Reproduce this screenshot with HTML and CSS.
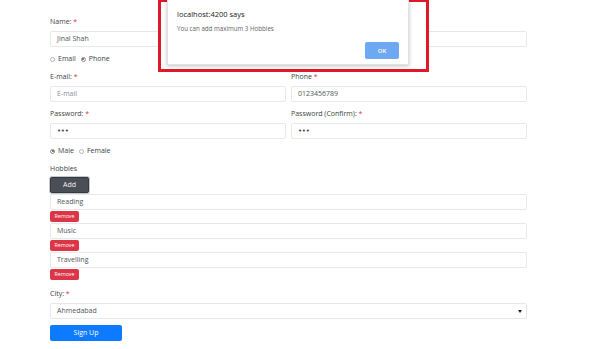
FILE: index.html
```html
<!DOCTYPE html>
<html>
<head>
<meta charset="utf-8">
<link rel="stylesheet" href="styles.css">
</head>
<body>
<div class="page">
  <form class="form">
    <div class="group">
      <label class="lbl">Name: <span class="req">*</span></label>
      <div class="input">Jinal Shah</div>
    </div>
    <div class="radios">
      <span class="radio"></span><span class="rlabel">Email</span>
      <span class="radio checked"></span><span class="rlabel">Phone</span>
    </div>
    <div class="row">
      <div class="group col">
        <label class="lbl">E-mail: <span class="req">*</span></label>
        <div class="input placeholder">E-mail</div>
      </div>
      <div class="group col">
        <label class="lbl">Phone <span class="req">*</span></label>
        <div class="input">0123456789</div>
      </div>
    </div>
    <div class="row">
      <div class="group col">
        <label class="lbl">Password: <span class="req">*</span></label>
        <div class="input dots">•••</div>
      </div>
      <div class="group col">
        <label class="lbl">Password (Confirm): <span class="req">*</span></label>
        <div class="input dots">•••</div>
      </div>
    </div>
    <div class="radios">
      <span class="radio checked"></span><span class="rlabel">Male</span>
      <span class="radio"></span><span class="rlabel">Female</span>
    </div>
    <div class="hobbies">
      <label class="lbl">Hobbies</label>
      <button type="button" class="btn-add">Add</button>
      <div class="hobby">
        <div class="input">Reading</div>
        <button type="button" class="btn-remove">Remove</button>
      </div>
      <div class="hobby">
        <div class="input">Music</div>
        <button type="button" class="btn-remove">Remove</button>
      </div>
      <div class="hobby">
        <div class="input">Travelling</div>
        <button type="button" class="btn-remove">Remove</button>
      </div>
    </div>
    <div class="group city">
      <label class="lbl">City: <span class="req">*</span></label>
      <div class="input select">Ahmedabad<span class="caret"></span></div>
    </div>
    <button type="button" class="btn-signup">Sign Up</button>
  </form>

  <div class="highlight">
    <div class="dialog">
      <div class="dlg-title">localhost:4200 says</div>
      <div class="dlg-msg">You can add maximum 3 Hobbies</div>
      <div class="dlg-actions"><button type="button" class="btn-ok">OK</button></div>
    </div>
  </div>
</div>
</body>
</html>
```

FILE: styles.css
```css
* { box-sizing: border-box; }
html, body { margin: 0; padding: 0; background: #fff; }
body {
  font-family: "Open Sans", "Noto Sans", Arial, sans-serif;
  color: #3a3f44;
  font-size: 7px;
  line-height: 10px;
}
.page { position: relative; width: 602px; height: 349px; overflow: hidden; }
.form {
  width: 477px;
  margin-left: 50px;
  padding-top: 17px;
  display: flex;
  flex-direction: column;
}
.group { display: flex; flex-direction: column; }
.lbl { display: block; height: 10px; margin-bottom: 4px; color: #3a3f44; }
.req { color: #dc3545; }
.input {
  height: 16px;
  border: 1px solid #e6e8eb;
  border-radius: 2px;
  padding: 0 6px;
  line-height: 14px;
  color: #50565c;
  background: #fff;
}
.placeholder { color: #8a9197; }
.dots { font-size: 7px; font-family: "DejaVu Sans", sans-serif; letter-spacing: -0.3px; color: #444; }
.radios {
  display: flex;
  align-items: center;
  height: 10px;
  margin-top: 7px;
  margin-bottom: 8px;
  color: #3a3f44;
}
.radio {
  width: 5px; height: 5px;
  border-radius: 50%;
  border: 1px solid #b5b5b5;
  background: #fff;
  margin-right: 3px;
  position: relative;
}
.radio.checked { border-color: #8a8a8a; }
.radio.checked::after {
  content: "";
  position: absolute;
  left: 0.5px; top: 0.5px;
  width: 2px; height: 2px;
  border-radius: 50%;
  background: #555;
}
.rlabel { margin-right: 5px; }
.row { display: flex; gap: 5px; }
.row + .row { margin-top: 7px; }
.col { flex: 1; }
.hobbies { display: flex; flex-direction: column; align-items: flex-start; }
.hobbies .lbl { margin-bottom: 3px; }
.btn-add {
  font: inherit;
  width: 39px; height: 16px;
  background: #4a4f55;
  color: #f2f2f2;
  border: 1px solid #343a40;
  border-radius: 2px;
  box-shadow: 0 0 0 1px #c4c8cc;
  padding: 0;
  margin-bottom: 1px;
}
.hobby { display: flex; flex-direction: column; align-items: flex-start; width: 100%; }
.hobby .input { width: 100%; }
.hobby + .hobby { margin-top: 1px; }
.btn-remove {
  font: inherit;
  font-size: 5.3px;
  width: 29px; height: 11px;
  margin-top: 1px;
  padding: 0;
  background: #dc3545;
  color: #fff;
  border: none;
  border-radius: 2px;
  line-height: 11px;
}
.city { margin-top: 9px; }
.select { position: relative; }
.caret {
  position: absolute;
  right: 4px; top: 6px;
  width: 0; height: 0;
  border-left: 2px solid transparent;
  border-right: 2px solid transparent;
  border-top: 3px solid #222;
}
.btn-signup {
  font: inherit;
  margin-top: 6px;
  width: 72px; height: 16px;
  background: #0d7bff;
  color: #fff;
  border: none;
  border-radius: 2px;
  padding: 0;
}
.highlight {
  position: absolute;
  left: 158px; top: -1px;
  width: 271px; height: 73px;
  border: 3px solid #e0192a;
  background: #fff;
}
.dialog {
  position: absolute;
  left: 6px; top: -8px;
  width: 242px; height: 71px;
  background: #fff;
  border: 1px solid #e2e2e2;
  box-shadow: 0 1px 4px rgba(0,0,0,0.25);
  padding: 14px 9px 0 9px;
}
.dlg-title { font-size: 7.5px; line-height: 10px; color: #202124; }
.dlg-msg { font-size: 6.2px; line-height: 9px; color: #5f6368; margin-top: 5px; }
.dlg-actions { display: flex; justify-content: flex-end; margin-top: 9px; }
.btn-ok {
  font: inherit;
  font-size: 6px;
  font-weight: 600;
  width: 34px; height: 17px;
  background: #6ea7f2;
  color: #fff;
  border: none;
  border-radius: 2px;
  padding: 0;
}
```
